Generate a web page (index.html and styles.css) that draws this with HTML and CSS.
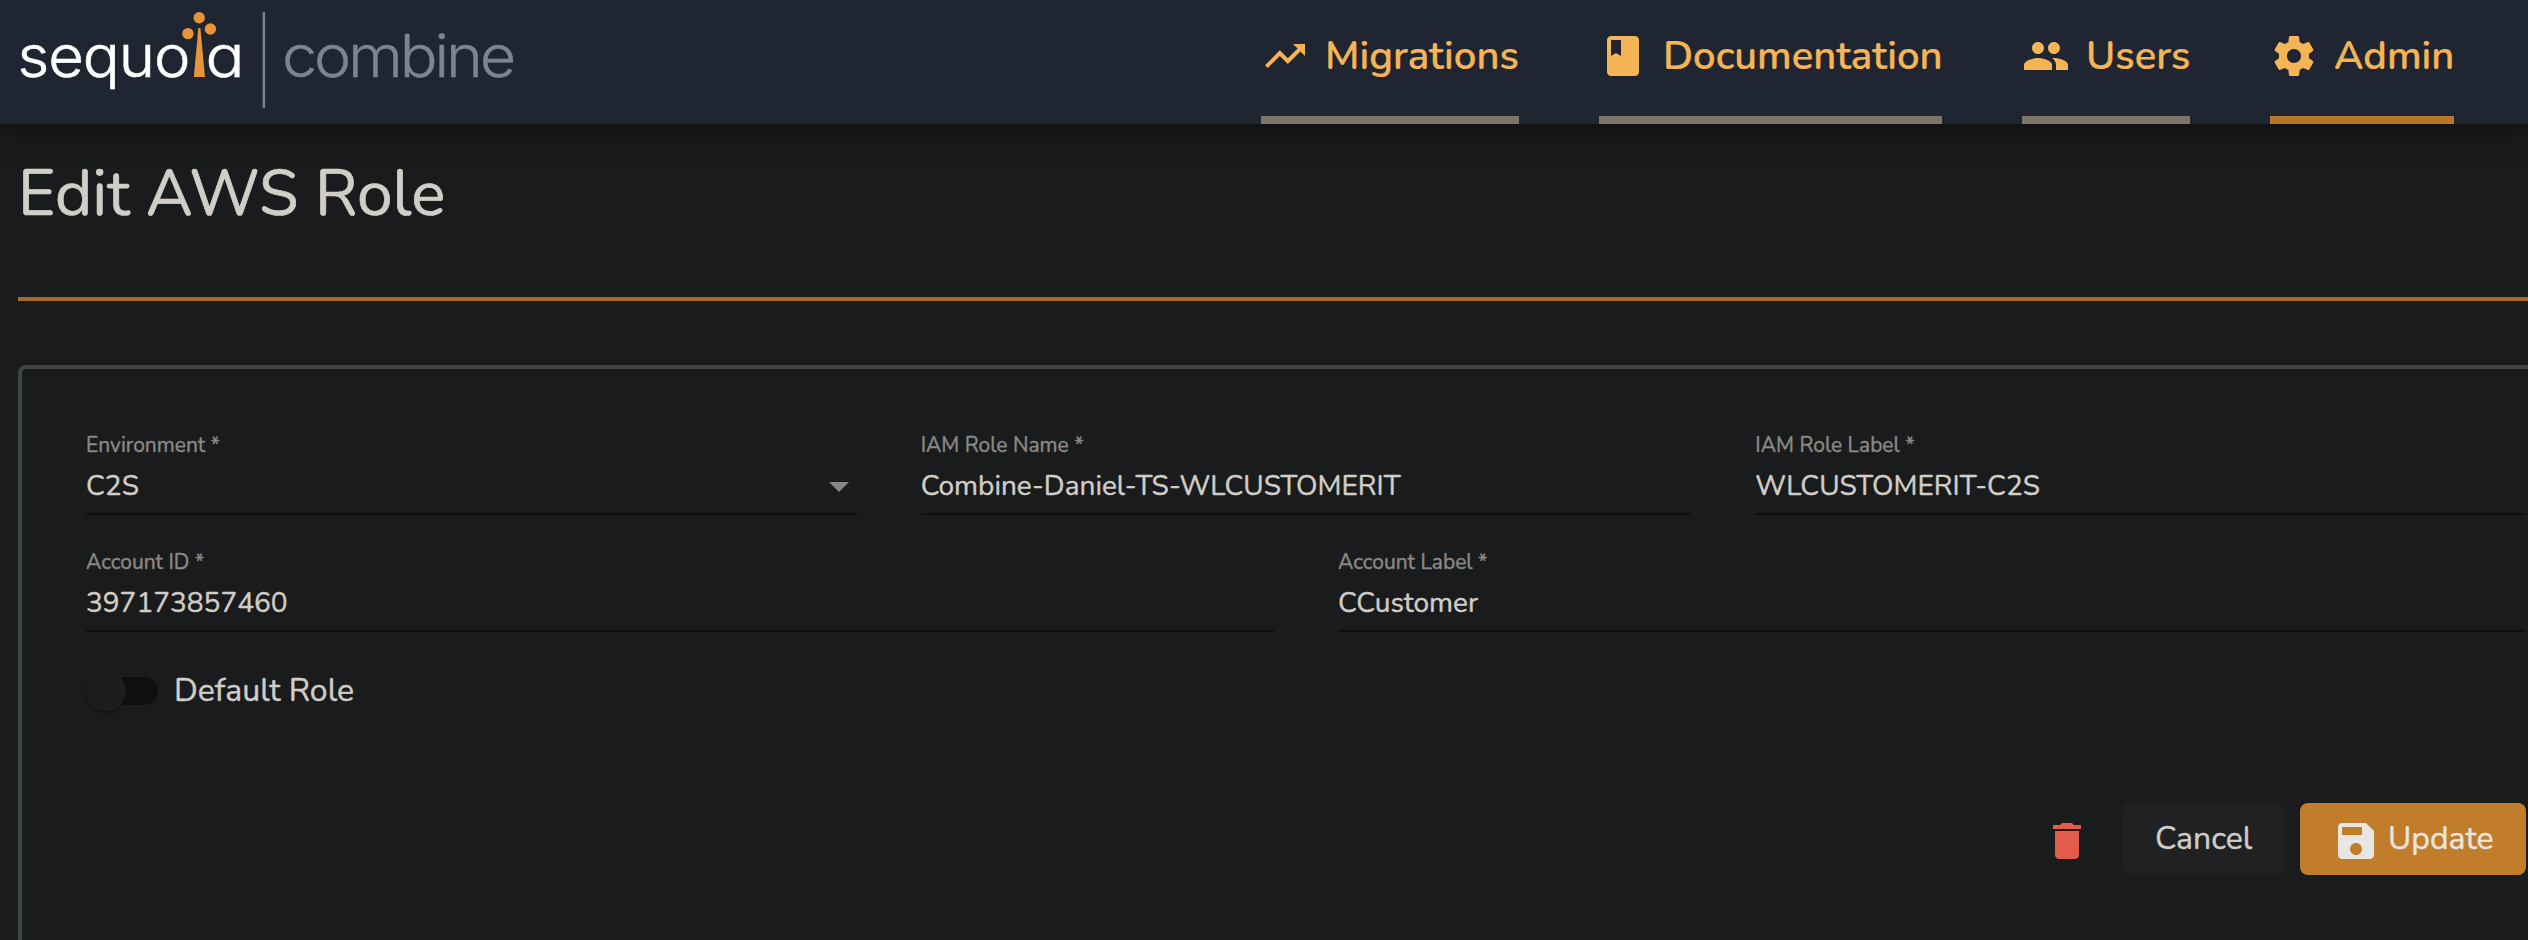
FILE: index.html
```
<!DOCTYPE html>
<html lang="en">
<head>
<meta charset="utf-8">
<title>Edit AWS Role</title>
<link rel="stylesheet" href="styles.css">
</head>
<body>
<header class="topbar">
  <svg class="logo" width="540" height="124" viewBox="0 0 540 124" role="img" aria-label="sequoia combine">
    <text class="logo-main" x="17.5" y="77" textLength="172" lengthAdjust="spacingAndGlyphs">sequo</text>
    <path class="logo-tree" d="M198.4 28h2L205 77h-11.2z"/>
    <circle class="logo-tree" cx="199.2" cy="17.7" r="5.7"/>
    <circle class="logo-tree" cx="187.9" cy="33.6" r="5.7"/>
    <circle class="logo-tree" cx="210.4" cy="29" r="5.7"/>
    <text class="logo-main" x="205.5" y="77" textLength="38" lengthAdjust="spacingAndGlyphs">a</text>
    <rect class="logo-rule" x="262.7" y="12" width="2.4" height="96"/>
    <text class="logo-sub" x="282" y="77" textLength="231" lengthAdjust="spacingAndGlyphs">combine</text>
  </svg>
  <nav class="nav">
    <a class="nav-item nav-migrations">
      <svg class="icon" viewBox="0 0 24 24"><path d="M16 6l2.29 2.29-4.88 4.88-4-4L2 16.59 3.41 18l6-6 4 4 6.3-6.29L22 12V6z"/></svg>
      <span class="nav-text">Migrations</span>
    </a>
    <a class="nav-item nav-docs">
      <svg class="icon" viewBox="0 0 24 24"><path d="M18 2H6c-1.1 0-2 .9-2 2v16c0 1.1.9 2 2 2h12c1.1 0 2-.9 2-2V4c0-1.1-.9-2-2-2zM6 4h5v8l-2.5-1.5L6 12V4z"/></svg>
      <span class="nav-text">Documentation</span>
    </a>
    <a class="nav-item nav-users">
      <svg class="icon" viewBox="0 0 24 24"><path d="M16 11c1.660 0 2.990-1.340 2.990-3S17.660 5 16 5c-1.660 0-3 1.340-3 3s1.340 3 3 3zm-8 0c1.660 0 2.990-1.340 2.990-3S9.660 5 8 5C6.340 5 5 6.340 5 8s1.340 3 3 3zm0 2c-2.330 0-7 1.170-7 3.500V19h14v-2.500c0-2.330-4.670-3.500-7-3.500zm8 0c-.29 0-.62.02-.97.05 1.160.84 1.970 1.970 1.970 3.450V19h6v-2.500c0-2.330-4.670-3.500-7-3.500z"/></svg>
      <span class="nav-text">Users</span>
    </a>
    <a class="nav-item nav-admin active">
      <svg class="icon" viewBox="0 0 24 24"><path d="M19.430 12.980c.04-.32.07-.64.07-.98s-.03-.66-.07-.98l2.110-1.650c.19-.15.24-.42.12-.64l-2-3.460c-.12-.22-.39-.3-.61-.22l-2.490 1c-.52-.4-1.080-.73-1.690-.98l-.38-2.650C14.460 2.180 14.250 2 14 2h-4c-.25 0-.46.18-.49.42l-.38 2.650c-.61.25-1.170.59-1.690.98l-2.490-1c-.23-.09-.49 0-.61.22l-2 3.460c-.13.22-.07.49.12.64l2.110 1.650c-.04.32-.07.65-.07.98s.03.66.07.98l-2.110 1.650c-.19.15-.24.42-.12.64l2 3.460c.12.22.39.3.61.22l2.490-1c.52.4 1.080.73 1.690.98l.38 2.650c.03.24.24.42.49.42h4c.25 0 .46-.18.49-.42l.38-2.650c.61-.25 1.170-.59 1.690-.98l2.490 1c.23.09.49 0 .61-.22l2-3.460c.12-.22.07-.49-.12-.64l-2.110-1.650zM12 15.500c-1.930 0-3.500-1.570-3.500-3.500s1.570-3.500 3.500-3.500 3.500 1.570 3.500 3.500-1.570 3.500-3.500 3.500z"/></svg>
      <span class="nav-text">Admin</span>
    </a>
  </nav>
</header>
<main class="page">
  <h1 class="title">Edit AWS Role</h1>
  <section class="card">
    <div class="row thirds">
      <div class="field">
        <div class="label">Environment *</div>
        <div class="value select">C2S<svg class="caret" viewBox="0 0 20 10"><path d="M0 0h20L10 10z"/></svg></div>
      </div>
      <div class="field">
        <div class="label">IAM Role Name *</div>
        <div class="value">Combine-Daniel-TS-WLCUSTOMERIT</div>
      </div>
      <div class="field">
        <div class="label">IAM Role Label *</div>
        <div class="value">WLCUSTOMERIT-C2S</div>
      </div>
    </div>
    <div class="row halves">
      <div class="field">
        <div class="label">Account ID *</div>
        <div class="value">397173857460</div>
      </div>
      <div class="field">
        <div class="label">Account Label *</div>
        <div class="value">CCustomer</div>
      </div>
    </div>
    <div class="toggle-row">
      <span class="toggle"><span class="knob"></span></span>
      <span class="toggle-label">Default Role</span>
    </div>
    <div class="actions">
      <svg class="icon trash" viewBox="0 0 24 24"><path d="M6 19c0 1.100.9 2 2 2h8c1.100 0 2-.9 2-2V7H6v12zM19 4h-3.500l-1-1h-5l-1 1H5v2h14V4z"/></svg>
      <button class="btn cancel"><span class="btn-text">Cancel</span></button>
      <button class="btn update">
        <svg class="icon" viewBox="0 0 24 24"><path d="M17 3H5c-1.110 0-2 .9-2 2v14c0 1.100.89 2 2 2h14c1.100 0 2-.9 2-2V7l-4-4zm-5 16c-1.660 0-3-1.340-3-3s1.340-3 3-3 3 1.340 3 3-1.340 3-3 3zm3-10H5V5h10v4z"/></svg>
        <span class="btn-text">Update</span>
      </button>
    </div>
  </section>
</main>
</body>
</html>
```
FILE: styles.css
```
* { box-sizing: border-box; }
html, body { margin: 0; height: 100%; overflow: hidden; }
body {
  background: #1a1b1c;
  color: #d1cdc7;
  font-family: Nunito, Lato, "Open Sans", sans-serif;
  -webkit-text-stroke: .4px;
}
.topbar {
  display: flex;
  justify-content: space-between;
  height: 124px;
  padding-right: 74px;
  background: #1f2631;
  box-shadow: 0 4px 24px rgba(0, 0, 0, .5);
}
.logo {
  flex: none;
  font-family: Inter, sans-serif;
  font-feature-settings: "cv11";
  -webkit-text-stroke: 0;
}
.logo-main, .logo-sub { font-size: 59px; font-weight: 300; }
.logo-main { fill: #fff; stroke: #fff; stroke-width: .6px; letter-spacing: -1px; }
.logo-sub { fill: #7f8390; stroke: #7f8390; stroke-width: .4px; letter-spacing: -3px; }
.logo-tree { fill: #e8943a; }
.logo-rule { fill: #7f8390; }
.nav { display: flex; gap: 80px; }
.nav-item {
  display: flex;
  gap: 16px;
  padding-top: 32px;
  border-bottom: 8px solid #7d7468;
  color: #f5b455;
}
.nav-item.active { border-color: #b87728; }
.nav-migrations { width: 258px; }
.nav-docs { width: 343px; }
.nav-users { width: 168px; }
.nav-admin { width: 184px; }
.nav-text {
  font-size: 40px;
  font-weight: 600;
  line-height: 48px;
  -webkit-text-stroke: .2px;
}
.icon { flex: none; width: 48px; height: 48px; fill: currentColor; }
.page { padding: 26px 0 0 18px; }
.title {
  margin: 0 0 64px;
  height: 151px;
  border-bottom: 4px solid #a66c25;
  padding-top: 4px;
  font-size: 64px;
  font-weight: 400;
  line-height: 80px;
  -webkit-text-stroke: .7px;
}
.card {
  width: 2576px;
  height: 575px;
  padding: 62px 64px 0;
  border: 4px solid #3e4446;
  border-bottom: 0;
  border-radius: 8px 8px 0 0;
}
.row { display: grid; gap: 64px; width: 2440px; margin-bottom: 33px; }
.thirds { grid-template-columns: repeat(3, 1fr); }
.halves { grid-template-columns: repeat(2, 1fr); }
.label { padding-top: 1px; color: #8b8986; font-size: 21px; line-height: 26px; }
.value {
  height: 57px;
  padding-top: 10px;
  border-bottom: 2px solid #0e0f11;
  font-size: 28px;
  line-height: 36px;
}
.select { display: flex; justify-content: space-between; padding-right: 8px; }
.caret { width: 20px; height: 10px; margin-top: 14px; fill: #878787; }
.toggle-row { display: flex; gap: 16px; height: 40px; margin-top: 39px; }
.toggle { width: 72px; height: 28px; margin-top: 6px; border-radius: 14px; background: #0d0f11; }
.knob {
  display: block;
  width: 40px;
  height: 40px;
  margin-top: -6px;
  border-radius: 50%;
  background: #1c1d1e;
  box-shadow: 0 2px 3px rgba(0, 0, 0, .3);
}
.toggle-label { font-size: 32px; line-height: 40px; }
.actions { display: flex; align-items: center; width: 2440px; height: 72px; margin-top: 92px; justify-content: flex-end; }
.trash { margin: 4px 32px 0 0; color: #e35b4a; }
.btn {
  display: flex;
  align-items: center;
  height: 72px;
  padding: 0 32px;
  border: 0;
  border-radius: 8px;
  font: inherit;
  font-size: 32px;
}
.btn-text { margin-top: -1px; line-height: 40px; }
.cancel { width: 161px; margin-right: 16px; background: #202122; color: #d1cdc7; }
.update { width: 226px; gap: 8px; background: #c17d2a; color: #e8e6e3; }
.update .icon { margin-top: 4px; }
```
